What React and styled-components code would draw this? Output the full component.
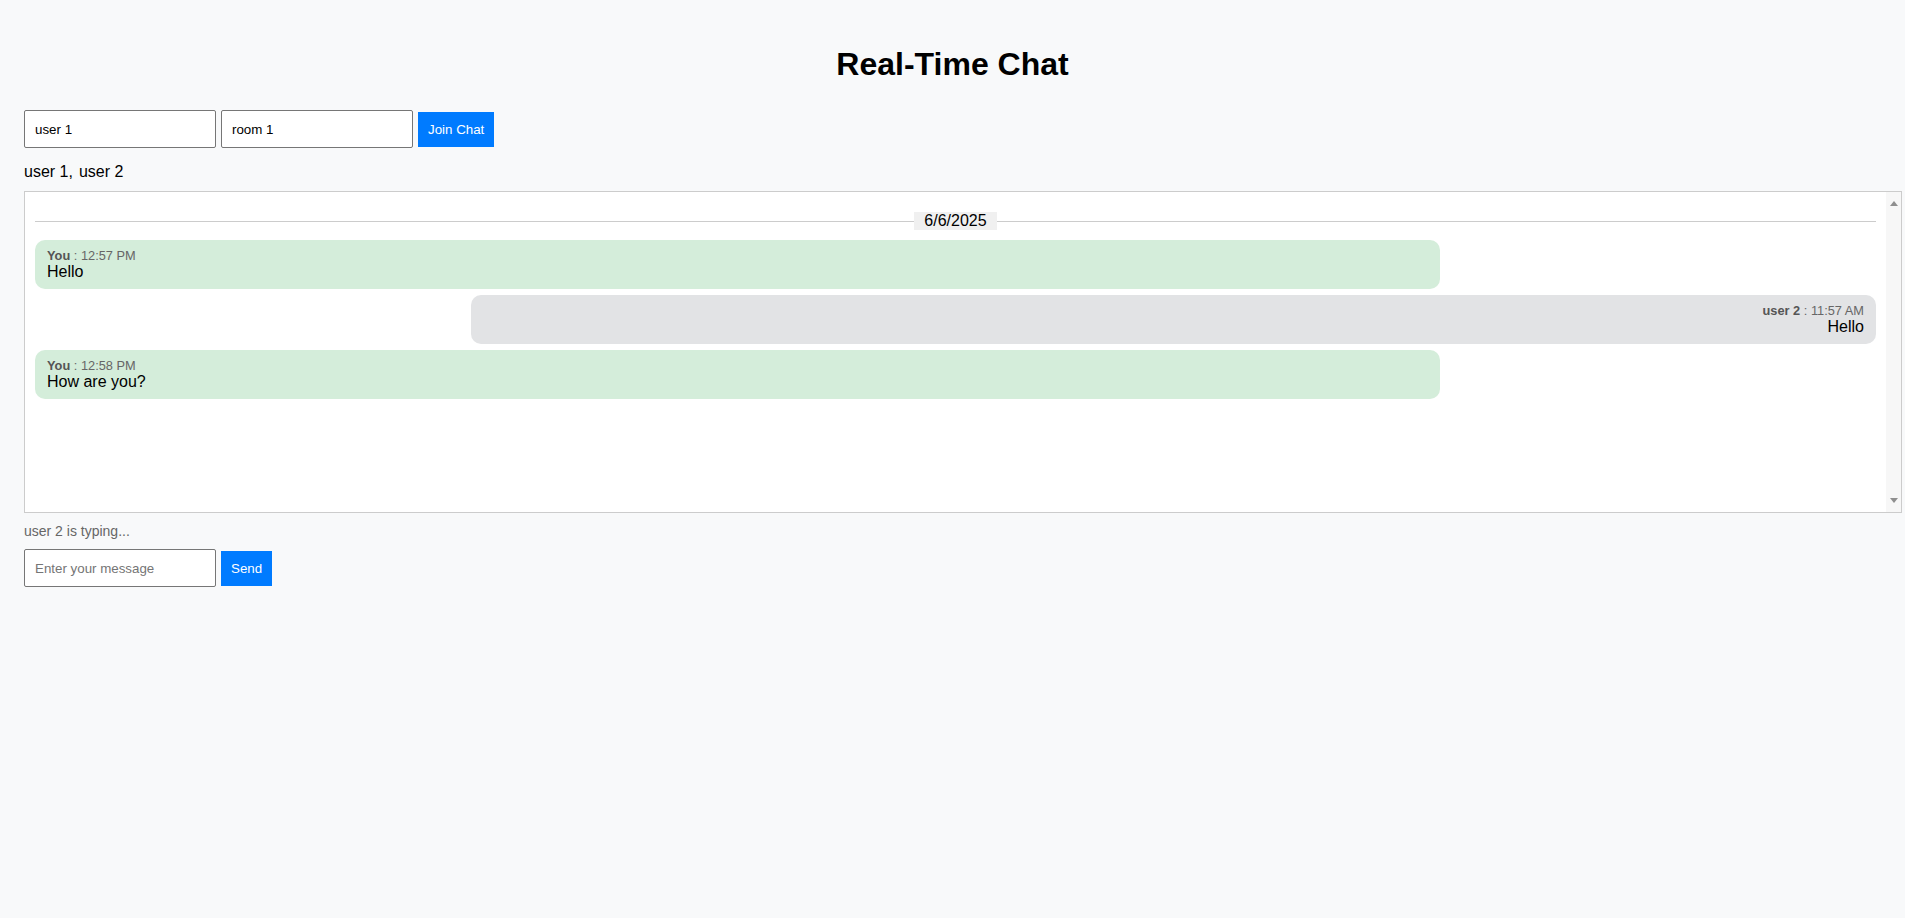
import React from 'react'
import styled, { createGlobalStyle } from 'styled-components';

const GlobalStyle = createGlobalStyle`
    html, body {
        margin: 0;
        background-color: #f8f9fa;
        font-family: "Liberation Sans", Arial, sans-serif;
        color: #000;
    }
`

const Page = styled.div`
    padding: 24px;
`

const Title = styled.h1`
    text-align: center;
    font-size: 32px;
    font-weight: bold;
    margin: 22px 0 27px;
`

const Row = styled.div`
    display: flex;
    align-items: center;
    gap: 5px;
`

const Input = styled.input`
    box-sizing: border-box;
    width: 192px;
    height: 38px;
    padding: 0 10px;
    font-family: "Liberation Sans", Arial, sans-serif;
    font-size: 13.33px;
    color: #000;
    background: #fff;
    border: 1px solid #767676;
    border-radius: 2px;
    outline: none;

    &::placeholder {
        color: #757575;
    }
`

const Button = styled.button`
    height: 35px;
    padding: 0 10px;
    background-color: #007bff;
    color: #fff;
    border: none;
    font-family: "Liberation Sans", Arial, sans-serif;
    font-size: 13.33px;
    cursor: pointer;
`

const Users = styled.div`
    display: flex;
    gap: 6px;
    font-size: 16px;
    margin: 15px 0 10px;
`

const ChatBox = styled.div`
    box-sizing: border-box;
    width: calc(100% + 21px);
    height: 322px;
    display: flex;
    background-color: #fff;
    border: 1px solid #ccc;
`

const MessageList = styled.div`
    flex: 1;
    min-width: 0;
    padding: 10px;
    overflow-y: auto;
`

const ScrollTrack = styled.div`
    width: 15px;
    flex-shrink: 0;
    display: flex;
    flex-direction: column;
    justify-content: space-between;
    align-items: center;
    padding: 9px 0;
    background-color: #f7f7f7;
`

const Arrow = styled.span`
    width: 0;
    height: 0;
    border-left: 4.5px solid transparent;
    border-right: 4.5px solid transparent;
    ${props => props.$down
        ? 'border-top: 5px solid #8f8f8f;'
        : 'border-bottom: 5px solid #8f8f8f;'}
`

const Divider = styled.div`
    display: flex;
    align-items: center;
    margin: 10px 0;

    &::before, &::after {
        content: '';
        flex: 1;
        height: 1px;
        background-color: #ccc;
    }

    span {
        background-color: #f0f0f0;
        padding: 0 10px;
        font-size: 16px;
        line-height: 18px;
    }
`

const Bubble = styled.div`
    width: 75%;
    margin: 6px 0;
    margin-left: ${props => props.$own ? '0' : 'auto'};
    padding: 8px 12px;
    border-radius: 10px;
    background-color: ${props => props.$own ? '#d4edda' : '#e2e3e5'};
    text-align: ${props => props.$own ? 'left' : 'right'};
`

const Meta = styled.div`
    font-size: 12.8px;
    color: #666;

    b {
        color: #555;
    }
`

const Text = styled.div`
    font-size: 16px;
`

const Typing = styled.div`
    font-size: 14px;
    color: #666;
    margin: 10px 0;
`

const messages = [
    { own: true, user: 'You', time: '12:57 PM', text: 'Hello' },
    { own: false, user: 'user 2', time: '11:57 AM', text: 'Hello' },
    { own: true, user: 'You', time: '12:58 PM', text: 'How are you?' },
]

export default function App() {
  return (
    <Page>
        <GlobalStyle />
        <Title>Real-Time Chat</Title>
        <Row>
            <Input defaultValue="user 1" />
            <Input defaultValue="room 1" />
            <Button>Join Chat</Button>
        </Row>
        <Users>
            <span>user 1,</span>
            <span>user 2</span>
        </Users>
        <ChatBox>
            <MessageList>
                <Divider><span>6/6/2025</span></Divider>
                {messages.map((m, i) => (
                    <Bubble key={i} $own={m.own}>
                        <Meta><b>{m.user}</b> : {m.time}</Meta>
                        <Text>{m.text}</Text>
                    </Bubble>
                ))}
            </MessageList>
            <ScrollTrack>
                <Arrow />
                <Arrow $down />
            </ScrollTrack>
        </ChatBox>
        <Typing>user 2 is typing...</Typing>
        <Row>
            <Input placeholder="Enter your message" />
            <Button>Send</Button>
        </Row>
    </Page>
  )
}
